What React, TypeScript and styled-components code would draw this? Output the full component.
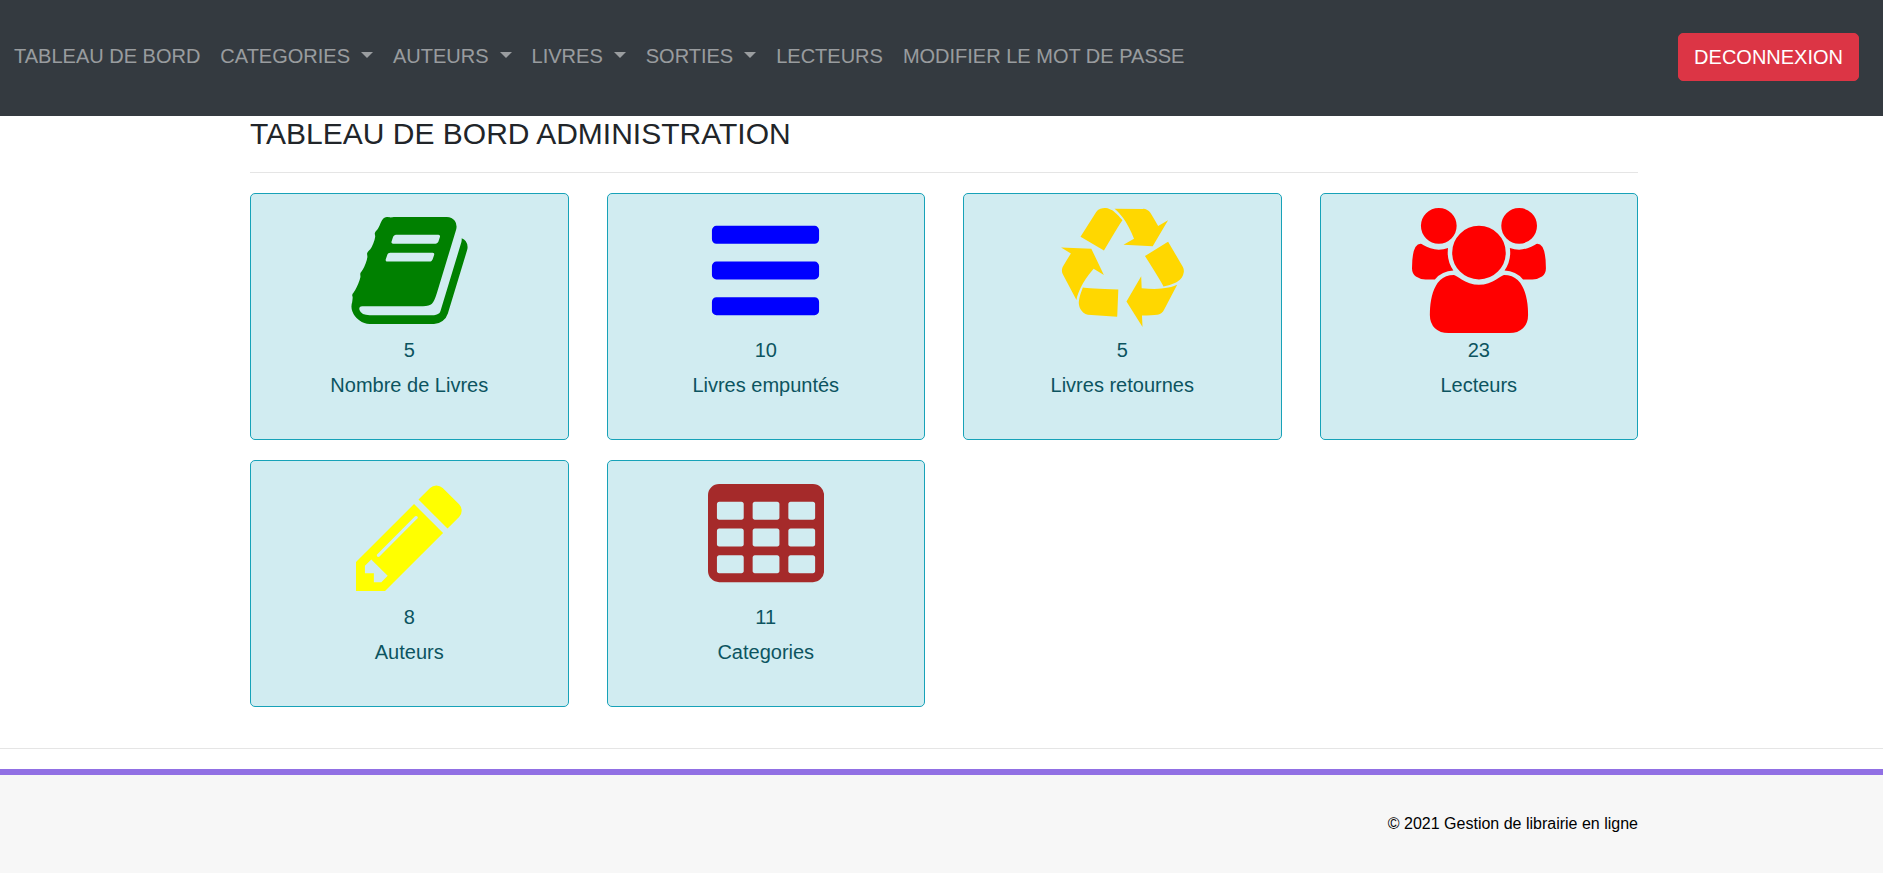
import React from 'react';
import styled, { createGlobalStyle, css } from 'styled-components';

const GlobalStyle = createGlobalStyle`
  *, *::before, *::after { box-sizing: border-box; }
  body {
    margin: 0;
    background: #fff;
    color: #212529;
    font-family: "Liberation Sans", Arial, sans-serif;
    font-size: 20px;
    line-height: 30px;
  }
`;

const Navbar = styled.nav`
  display: flex;
  flex-wrap: wrap;
  align-items: flex-end;
  justify-content: space-between;
  padding: 31px 24px 35px 4px;
  background: #343a40;
`;

const NavList = styled.ul`
  display: flex;
  flex-wrap: wrap;
  margin: 0;
  padding: 0;
  list-style: none;
`;

const navItem = css`
  display: block;
  padding: 10px;
  border: 0;
  background: none;
  color: rgba(255, 255, 255, 0.5);
  font: inherit;
  text-decoration: none;
  white-space: nowrap;
  cursor: pointer;

  &:hover { color: rgba(255, 255, 255, 0.75); }
`;

const NavLink = styled.a`${navItem}`;

const NavToggle = styled.button`
  ${navItem}

  &::after {
    content: "";
    display: inline-block;
    margin-left: 11px;
    vertical-align: 5px;
    border-top: 6px solid;
    border-right: 6px solid transparent;
    border-left: 6px solid transparent;
  }
`;

const LogoutButton = styled.button`
  padding: 8px 15px;
  border: 1px solid #dc3545;
  border-radius: 5px;
  background: #dc3545;
  color: #fff;
  font: inherit;
  cursor: pointer;
`;

const Container = styled.div`
  width: 100%;
  max-width: 1388px;
  margin: 0 auto;
`;

const Main = styled.main`
  padding-left: 5px;
`;

const Title = styled.h4`
  margin: 0;
  font-size: 30px;
  font-weight: 400;
  line-height: 36px;
`;

const Divider = styled.hr`
  margin: 20px 0;
  border: 0;
  border-top: 1px solid rgba(0, 0, 0, 0.1);
`;

const Grid = styled.div`
  display: grid;
  grid-template-columns: repeat(auto-fill, minmax(300px, 1fr));
  gap: 20px 38px;
  margin-bottom: 41px;
`;

const Card = styled.section`
  display: flex;
  flex-direction: column;
  align-items: center;
  padding: 14px 15px 36px;
  border: 1px solid #17a2b8;
  border-radius: 5px;
  background: #d1ecf1;
  color: #0c5460;
  text-align: center;
`;

const Icon = styled.svg<{ $color: string }>`
  display: block;
  height: 125px;
  fill: ${({ $color }) => $color};
`;

const CardText = styled.div`
  line-height: 35px;
`;

const Footer = styled.footer`
  padding: 34px 0 34px 5px;
  border-top: 6px solid #9170e4;
  background: #f7f7f7;
  color: #000;
  font-size: 16px;
  text-align: right;
`;

const BOOK =
  'M1703 478q40 57 18 129l-275 906q-19 64-76.5 107.5t-122.5 43.5h-923q-77 0-148.5-53.5t-99.5-131.5q-24-67-2-127 0-4 3-27t4-37q1-8-3-21.5t-3-19.5q2-11 8-21t16.5-23.5 16.5-23.5q23-38 45-91.5t30-91.5q3-10 .5-30t-.5-28q3-11 17-28t17-23q21-36 42-92t25-90q1-9-2.5-32t.5-28q4-13 22-30.5t22-22.5q19-26 42.5-84.5t27.5-96.5q1-8-3-25.5t-2-26.5q2-8 9-18t18-23 17-21q8-12 16.5-30.5t15-35 16-36 19.5-32 26.5-23.5 36-11.5 47.5 5.5l-1 3q38-9 51-9h761q74 0 114 56t18 130l-274 906q-36 119-71.5 153.5t-128.5 34.5h-869q-27 0-38 15-11 16-1 43 24 70 144 70h923q29 0 56-15.5t35-41.5l300-987q7-22 5-57 38 15 59 43zm-1064 2q-4 13 2 22.5t20 9.5h608q13 0 25.5-9.5t16.5-22.5l21-64q4-13-2-22.5t-20-9.5h-608q-13 0-25.5 9.5t-16.5 22.5zm-83 256q-4 13 2 22.5t20 9.5h608q13 0 25.5-9.5t16.5-22.5l21-64q4-13-2-22.5t-20-9.5h-608q-13 0-25.5 9.5t-16.5 22.5z';

const BARS =
  'M1664 1344v128q0 26-19 45t-45 19h-1408q-26 0-45-19t-19-45v-128q0-26 19-45t45-19h1408q26 0 45 19t19 45zm0-512v128q0 26-19 45t-45 19h-1408q-26 0-45-19t-19-45v-128q0-26 19-45t45-19h1408q26 0 45 19t19 45zm0-512v128q0 26-19 45t-45 19h-1408q-26 0-45-19t-19-45v-128q0-26 19-45t45-19h1408q26 0 45 19t19 45z';

const RECYCLE =
  'M836 1169l-15 368-2 22-420-29q-36-3-67-31.5t-47-65.5q-11-27-14.5-55t4-65 12-55 21.5-64 19-53q78 12 509 28zm-387-586l180 379-147-92q-63 72-111.5 144.5t-72.5 125-39.5 94.5-18.5 63l-4 21-190-357q-17-26-18-56t6-47l8-18q35-63 114-188l-140-86zm1231 517l-188 359q-12 29-36.5 46.5t-43.5 20.5l-18 4q-71 7-219 12l8 164-230-367 211-362 7 173q170 16 283 5t170-33zm-785-924q-47 63-265 435l-317-187-19-12 225-356q20-31 60-45t80-10q24 2 48.5 12t42 21 41.5 33 36 34.5 36 39.5 32 35zm655 307l212 363q18 37 12.5 76t-27.5 74q-13 20-33 37t-38 28-48.5 22-47 16-51.5 14-46 12q-34-72-265-436l313-195zm-143-226l142-83-220 373-419-20 151-86q-34-89-75-166t-75.5-123.5-64.5-80-47-46.5l-17-13 405 1q31-3 58 10.5t39 28.5l11 15q39 61 112 190z';

const USERS =
  'M657 896q-162 5-265 128h-134q-82 0-138-40.5t-56-118.5q0-353 124-353 6 0 43.5 21t97.5 42.5 119 21.5q67 0 133-23-5 37-5 66 0 139 81 256zm1071 637q0 120-73 189.5t-194 69.5h-874q-121 0-194-69.5t-73-189.5q0-53 3.5-103.5t14-109 26.5-108.5 43-97.5 62-81 85.5-53.5 111.5-20q10 0 43 21.5t73 48 107 48 135 21.5 135-21.5 107-48 73-48 43-21.5q61 0 111.5 20t85.5 53.5 62 81 43 97.5 26.5 108.5 14 109 3.5 103.5zm-1024-1277q0 106-75 181t-181 75-181-75-75-181 75-181 181-75 181 75 75 181zm704 384q0 159-112.5 271.5t-271.5 112.5-271.5-112.5-112.5-271.5 112.5-271.5 271.5-112.5 271.5 112.5 112.5 271.5zm576 225q0 78-56 118.5t-138 40.5h-134q-103-123-265-128 81-117 81-256 0-29-5-66 66 23 133 23 59 0 119-21.5t97.5-42.5 43.5-21q124 0 124 353zm-128-609q0 106-75 181t-181 75-181-75-75-181 75-181 181-75 181 75 75 181z';

const PENCIL =
  'M491 1536l91-91-235-235-91 91v107h128v128h107zm523-928q0-22-22-22-10 0-17 7l-542 542q-7 7-7 17 0 22 22 22 10 0 17-7l542-542q7-7 7-17zm-54-192l416 416-832 832h-416v-416zm683 96q0 53-37 90l-166 166-416-416 166-165q36-38 90-38 53 0 91 38l235 234q37 39 37 91z';

const CELL = 'v-192q0-14-9-23t-23-9h-320q-14 0-23 9t-9 23v192q0 14 9 23t23 9h320q14 0 23-9t9-23z';

const TABLE =
  [576, 1088, 1600]
    .flatMap((x) => [608, 992, 1376].map((y) => `M${x} ${y}${CELL}`))
    .join('') +
  'M1728 288v1088q0 66-47 113t-113 47h-1344q-66 0-113-47t-47-113v-1088q0-66 47-113t113-47h1344q66 0 113 47t47 113z';

const navItems = [
  { label: 'TABLEAU DE BORD', menu: false },
  { label: 'CATEGORIES', menu: true },
  { label: 'AUTEURS', menu: true },
  { label: 'LIVRES', menu: true },
  { label: 'SORTIES', menu: true },
  { label: 'LECTEURS', menu: false },
  { label: 'MODIFIER LE MOT DE PASSE', menu: false },
];

const stats = [
  { label: 'Nombre de Livres', value: 5, color: 'green', path: BOOK, viewBox: '0 0 1792 1792' },
  { label: 'Livres empuntés', value: 10, color: 'blue', path: BARS, viewBox: '0 0 1792 1792' },
  { label: 'Livres retournes', value: 5, color: 'gold', path: RECYCLE, viewBox: '0 0 1792 1792' },
  { label: 'Lecteurs', value: 23, color: 'red', path: USERS, viewBox: '64 0 1920 1792' },
  { label: 'Auteurs', value: 8, color: 'yellow', path: PENCIL, viewBox: '128 0 1536 1792' },
  { label: 'Categories', value: 11, color: 'brown', path: TABLE, viewBox: '64 0 1664 1792' },
];

export default function App() {
  return (
    <>
      <GlobalStyle />
      <Navbar>
        <NavList>
          {navItems.map(({ label, menu }) => (
            <li key={label}>
              {menu ? (
                <NavToggle type="button" aria-haspopup="true">{label}</NavToggle>
              ) : (
                <NavLink href="#">{label}</NavLink>
              )}
            </li>
          ))}
        </NavList>
        <LogoutButton type="button">DECONNEXION</LogoutButton>
      </Navbar>
      <Main>
        <Container>
          <Title>TABLEAU DE BORD ADMINISTRATION</Title>
          <Divider />
          <Grid>
            {stats.map(({ label, value, color, path, viewBox }) => (
              <Card key={label}>
                <Icon $color={color} viewBox={viewBox} aria-hidden="true">
                  <path fillRule="evenodd" d={path} />
                </Icon>
                <CardText>{value}</CardText>
                <CardText>{label}</CardText>
              </Card>
            ))}
          </Grid>
        </Container>
      </Main>
      <Divider />
      <Footer>
        <Container>© 2021 Gestion de librairie en ligne</Container>
      </Footer>
    </>
  );
}
